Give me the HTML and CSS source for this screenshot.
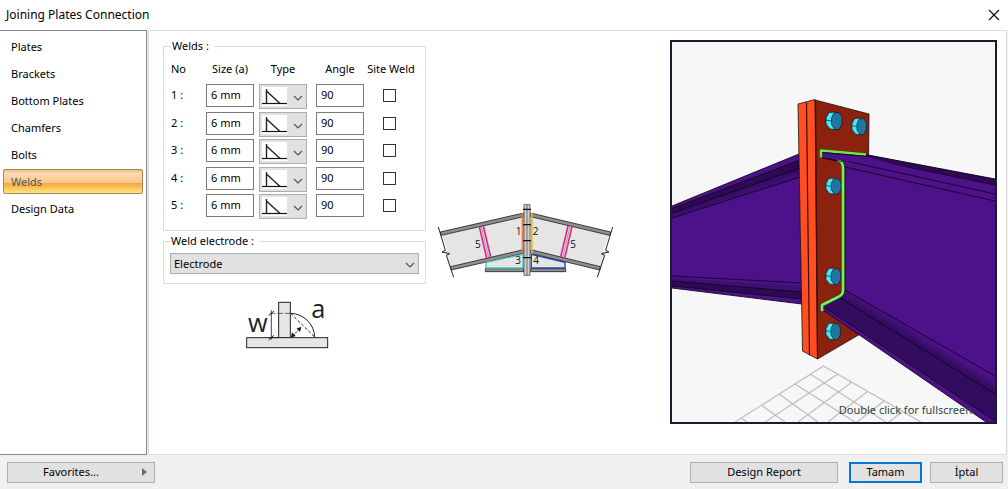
FILE: index.html
```html
<!DOCTYPE html>
<html lang="en">
<head>
<meta charset="utf-8">
<title>Joining Plates Connection</title>
<link rel="stylesheet" href="styles.css">
</head>
<body>
<header class="titlebar">
  <h1 class="title">Joining Plates Connection</h1>
  <button class="close" type="button" aria-label="Close">
    <svg width="12" height="12" viewBox="0 0 12 12"><path d="M1 1L11 11M11 1L1 11" stroke="#111" stroke-width="1.2"/></svg>
  </button>
</header>

<main class="main">
  <nav class="pages" aria-label="Pages">
    <button class="page" type="button">Plates</button>
    <button class="page" type="button">Brackets</button>
    <button class="page" type="button">Bottom Plates</button>
    <button class="page" type="button">Chamfers</button>
    <button class="page" type="button">Bolts</button>
    <button class="page selected" type="button" aria-current="page">Welds</button>
    <button class="page" type="button">Design Data</button>
  </nav>

  <section class="panel">
    <svg class="defs" width="0" height="0" aria-hidden="true">
      <symbol id="fillet" viewBox="0 0 25 19">
        <rect width="25" height="19" fill="#fff"/>
        <path d="M4.500 2V16.500M4.500 4L18 16.500" fill="none" stroke="#222" stroke-width="1.400"/>
        <path d="M0 16.500H25" stroke="#111" stroke-width="1.200"/>
      </symbol>
      <symbol id="chevron" viewBox="0 0 10 6">
        <path d="M1 1L5 5L9 1" fill="none" stroke="#555" stroke-width="1.200"/>
      </symbol>
    </svg>

    <div class="settings">
      <fieldset class="group">
        <legend>Welds :</legend>
        <table class="welds">
          <thead>
            <tr><th class="no">No</th><th class="size">Size (a)</th><th class="type">Type</th><th class="angle">Angle</th><th class="site">Site Weld</th></tr>
          </thead>
          <tbody>
            <tr>
              <td>1 :</td>
              <td><input class="field" type="text" value="6 mm" aria-label="Size of weld 1"></td>
              <td><div class="combo small"><select aria-label="Type of weld 1"><option aria-label="Fillet"></option></select><svg class="pic"><use href="#fillet"/></svg><svg class="arrow"><use href="#chevron"/></svg></div></td>
              <td><input class="field" type="text" value="90" aria-label="Angle of weld 1"></td>
              <td class="tick"><input type="checkbox" aria-label="Site weld 1"></td>
            </tr>
            <tr>
              <td>2 :</td>
              <td><input class="field" type="text" value="6 mm" aria-label="Size of weld 2"></td>
              <td><div class="combo small"><select aria-label="Type of weld 2"><option aria-label="Fillet"></option></select><svg class="pic"><use href="#fillet"/></svg><svg class="arrow"><use href="#chevron"/></svg></div></td>
              <td><input class="field" type="text" value="90" aria-label="Angle of weld 2"></td>
              <td class="tick"><input type="checkbox" aria-label="Site weld 2"></td>
            </tr>
            <tr>
              <td>3 :</td>
              <td><input class="field" type="text" value="6 mm" aria-label="Size of weld 3"></td>
              <td><div class="combo small"><select aria-label="Type of weld 3"><option aria-label="Fillet"></option></select><svg class="pic"><use href="#fillet"/></svg><svg class="arrow"><use href="#chevron"/></svg></div></td>
              <td><input class="field" type="text" value="90" aria-label="Angle of weld 3"></td>
              <td class="tick"><input type="checkbox" aria-label="Site weld 3"></td>
            </tr>
            <tr>
              <td>4 :</td>
              <td><input class="field" type="text" value="6 mm" aria-label="Size of weld 4"></td>
              <td><div class="combo small"><select aria-label="Type of weld 4"><option aria-label="Fillet"></option></select><svg class="pic"><use href="#fillet"/></svg><svg class="arrow"><use href="#chevron"/></svg></div></td>
              <td><input class="field" type="text" value="90" aria-label="Angle of weld 4"></td>
              <td class="tick"><input type="checkbox" aria-label="Site weld 4"></td>
            </tr>
            <tr>
              <td>5 :</td>
              <td><input class="field" type="text" value="6 mm" aria-label="Size of weld 5"></td>
              <td><div class="combo small"><select aria-label="Type of weld 5"><option aria-label="Fillet"></option></select><svg class="pic"><use href="#fillet"/></svg><svg class="arrow"><use href="#chevron"/></svg></div></td>
              <td><input class="field" type="text" value="90" aria-label="Angle of weld 5"></td>
              <td class="tick"><input type="checkbox" aria-label="Site weld 5"></td>
            </tr>
          </tbody>
        </table>
      </fieldset>

      <fieldset class="group electrode">
        <legend><label for="electrode">Weld electrode :</label></legend>
        <div class="combo"><select id="electrode"><option>Electrode</option></select><svg class="arrow"><use href="#chevron"/></svg></div>
      </fieldset>

      <svg class="sketch" width="97" height="61" viewBox="32 -9 291 183" role="img" aria-label="Weld throat dimensions">
        <g fill="#e6e6e6" stroke="#222" stroke-width="3">
          <rect x="130" y="34" width="35" height="106"/>
          <rect x="34" y="140" width="243" height="30"/>
        </g>
        <g fill="none" stroke="#222">
          <path d="M166 67C205 68 238 100 238 139" stroke-width="3"/>
          <path d="M166 67L238 138" stroke-width="3" stroke-dasharray="9 6"/>
          <path d="M103 67H166" stroke-width="2" stroke-dasharray="18 5"/>
          <path d="M108 58V146M98 140H130" stroke-width="2.500"/>
          <path d="M100 74L116 60M100 147L116 133" stroke-width="3"/>
          <path d="M171 136L194 112" stroke-width="3" stroke-dasharray="8 4"/>
        </g>
        <path d="M167 140L170 124L181 135ZM198 108L184 112L194 123Z" fill="#111"/>
        <text class="dim" x="38" y="123">w</text>
        <text class="dim" x="228" y="81">a</text>
      </svg>
    </div>

    <div class="overview">
      <svg width="175" height="75" viewBox="24 24 525 225" role="img" aria-label="Weld numbering">
        <g fill="#e5e5e4">
          <path d="M31 112L281 56V175L61 223L48 176L39 170L54 168Z"/>
          <path d="M542 112L302 56V175L512 223L525 176L534 170L519 168Z"/>
          <path d="M166 203L281 178V220H166ZM407 203L302 178V220H407Z"/>
        </g>
        <g fill="#8f8f8f" stroke="#222" stroke-width="2.500">
          <path d="M31 111L281 54V65L34 121Z"/>
          <path d="M542 111L302 54V65L539 121Z"/>
          <path d="M62 215L281 164V175L64 225Z"/>
          <path d="M511 215L302 164V175L509 225Z"/>
          <path d="M166 221H281V230H166ZM302 221H407V230H302Z"/>
        </g>
        <path d="M279 178L168 202V219H279Z" fill="none" stroke="#47c2c4" stroke-width="4"/>
        <path d="M304 178L405 202V219H304Z" fill="none" stroke="#2345a5" stroke-width="4"/>
        <g stroke="#e3268b" stroke-width="5">
          <path d="M148 95L170 190M160 93L182 186M426 95L404 190M414 93L392 186"/>
        </g>
        <path d="M154 94L176 188M420 94L398 188" stroke="#555" stroke-width="1.500"/>
        <path d="M278 54V176" stroke="#e77b49" stroke-width="6"/>
        <path d="M305 54V176" stroke="#e8b72e" stroke-width="6"/>
        <path d="M282 29H300V241H282Z" fill="#cfcfcf" stroke="#333" stroke-width="2"/>
        <path d="M291 29V241" stroke="#444" stroke-width="2"/>
        <path d="M279 43H303M279 89H303M279 137H303M279 188H303" stroke="#111" stroke-width="4"/>
        <path d="M25 96L46 166L36 171L59 176L49 181L71 247M548 96L527 166L537 171L514 176L524 181L502 247" fill="none" stroke="#222" stroke-width="3"/>
        <g class="num">
          <text x="257" y="119">1</text><text x="308" y="119">2</text>
          <text x="256" y="206">3</text><text x="310" y="206">4</text>
          <text x="135" y="159">5</text><text x="421" y="159">5</text>
        </g>
      </svg>
    </div>

    <div class="viewer">
      <svg class="scene" viewBox="672 42 323 380" preserveAspectRatio="xMidYMid slice" role="img" aria-label="3D model of the connection">
        <defs>
          <linearGradient id="lfade" gradientUnits="userSpaceOnUse" x1="736" y1="189" x2="740" y2="201"><stop offset="0" stop-color="#2e0a5c"/><stop offset="1" stop-color="#4d1289"/></linearGradient>
          <linearGradient id="rfade" gradientUnits="userSpaceOnUse" x1="922" y1="347" x2="930" y2="334"><stop offset="0" stop-color="#320c5e"/><stop offset=".7" stop-color="#4d1289"/></linearGradient>
          <g id="bolt" stroke="#06181f" stroke-width=".7" stroke-linejoin="round">
            <path d="M3 .500L10 0L6 9L9 17.500L4 17L0 12V6Z" fill="#45eaff"/>
            <path d="M0 8L5 9" />
            <path d="M8 1L13 .500L16 5V12L13 17.500H9L5.500 12.500V6Z" fill="#22759f"/>
          </g>
        </defs>
        <rect x="600" y="0" width="500" height="500" fill="#f7f7f7"/>
        <g fill="none" stroke="#bdbdb9" stroke-width="1.200">
          <path d="M735 422L823.500 366L921 422"/>
          <path d="M810 374L886 422M795 384L855 422M779 394L818 422M761 405L785 422M741 418L747 422"/>
          <path d="M838 374L765 422M852 382L798 422M867 392L828 422M884 401L857 422M902 412L889 422"/>
        </g>

        <path d="M672 206L799 154L802 304L672 288Z" fill="#4d1289"/>
        <path d="M672 213L800 168V177L672 218Z" fill="url(#lfade)"/>
        <path d="M672 208.500L800 160V168L672 213Z" fill="#2e0a55"/>
        <path d="M672 281L802 292V299L672 286Z" fill="#2e0a55"/>
        <path d="M672 278L802 286V292L672 281Z" fill="#3f0f75"/>
        <path d="M672 206L799 154M672 208.500L800 160M672 213L800 168M672 218L800 177M672 276L802 283M672 281L802 292M672 286L802 299M672 288L802 304" fill="none" stroke="#12041f" stroke-width=".9"/>

        <path d="M815 100L869 114L867 330L817.500 359Z" fill="#8a220d" stroke="#111" stroke-width=".8"/>
        <path d="M798 104L815 99.500L817.500 359L802.500 351Z" fill="#ff4f20" stroke="#111" stroke-width=".8"/>
        <path d="M815.500 100L817.500 359M806.500 102.500L809.500 355" stroke="#3a0d05" stroke-width="1.200"/>

        <use href="#bolt" x="826" y="112"/>
        <use href="#bolt" transform="translate(852 118) scale(.9 .95)"/>
        <use href="#bolt" transform="translate(826 178) scale(.94 .92)"/>
        <use href="#bolt" transform="translate(826 268) scale(.92 .95)"/>
        <use href="#bolt" transform="translate(826 323) scale(.9 .95)"/>

        <path d="M822 151L840 152L868 155L995 179V422H986L823 310V306L840 297L844.500 290V168L841 162L822 158Z" fill="#4d1289"/>
        <path d="M840 152L868 155L995 179V185Z" fill="#2e0a55"/>
        <path d="M846 290L995 376V394L840 299Z" fill="url(#rfade)"/>
        <path d="M840 298L995 394V421L824 307Z" fill="#320c5e"/>
        <path d="M822 152L868 155L995 179M840 153L995 185M842 160L995 194M845 167L995 201M845 290L995 376M840 298L995 394M824 307L995 421M823 310L986 422" fill="none" stroke="#12041f" stroke-width=".9"/>
        <path d="M822 158L841 162L845 168V290" fill="none" stroke="#111" stroke-width=".8"/>
        <g fill="none" stroke-linejoin="round">
          <path d="M821 158V151L866 155" stroke="#173d12" stroke-width="4"/>
          <path d="M821 157.500V150.500L866 154.500" stroke="#72e452" stroke-width="2.600"/>
          <path d="M837 160Q843 161 843 168V290Q843 295 838 297L822 305V311" stroke="#173d12" stroke-width="4"/>
          <path d="M837 160Q843 161 843 168V290Q843 295 838 297L822 305V311" stroke="#80ed62" stroke-width="2.600"/>
        </g>
        <path d="M822.500 152.500L868 157L900 166L842 160.500L822.500 157.500Z" fill="#4d1289"/>
        <path d="M822.500 152.500L868 156.500M822.500 157.500L842 161.500" stroke="#12041f" stroke-width=".9"/>
      </svg>
      <p class="hint">Double click for fullscreen.</p>
    </div>
  </section>
</main>

<footer class="footer">
  <button class="btn wide favorites" type="button"><span>Favorites...</span>
    <svg width="5" height="8" viewBox="0 0 5 8"><path d="M0 0L5 4L0 8Z" fill="#6d6d6d"/></svg>
  </button>
  <button class="btn wide report" type="button">Design Report</button>
  <div class="confirm">
    <button class="btn primary" type="button">Tamam</button>
    <button class="btn" type="button">İptal</button>
  </div>
</footer>
</body>
</html>
```
FILE: styles.css
```css
* { box-sizing: border-box; }

body {
  margin: 0;
  min-height: 100vh;
  display: flex;
  flex-direction: column;
  background: #f0f0f0;
  color: #000;
  font: 11px/14px "Noto Sans", "Open Sans", sans-serif;
}

button, input, select { font: inherit; color: inherit; border-radius: 0; margin: 0; }

.titlebar {
  height: 30px;
  padding: 0 8px 0 6px;
  display: flex;
  align-items: center;
  justify-content: space-between;
  background: #fff;
}
.title { margin: 0; font-size: 12px; font-weight: normal; }
.close { display: flex; padding: 0; border: 0; background: none; }

.main { flex: 1; display: flex; gap: 1px; padding-right: 1px; }

.pages {
  width: 147px;
  padding: 3px;
  display: flex;
  flex-direction: column;
  gap: 2px;
  background: #fff;
  border: 1px solid #828790;
  border-left: 0;
}
.page {
  height: 25px;
  padding: 0 7px;
  text-align: left;
  background: none;
  border: 1px solid transparent;
}
.page.selected {
  color: #555;
  border-color: #a58a58;
  border-radius: 2px;
  background: linear-gradient(#e9c08f 0, #fbd9b0 15%, #f8c88e 55%, #f4a840 58%, #fbcf65 85%, #fde28c 100%);
}

.panel {
  flex: 1;
  display: flex;
  padding: 9px 9px 30px 14px;
  background: #fff;
  border: 1px solid #dcdcdc;
}
.defs { position: absolute; }

.settings { width: 263px; display: flex; flex-direction: column; }

.group { min-width: 0; margin: 0; padding: 10px 7px 8px; border: 1px solid #dcdcdc; }
.group legend { padding: 0 5px 0 1px; line-height: 12px; }
.electrode { margin-top: 4px; padding: 6px 6px 9px; }

.welds { width: 100%; table-layout: fixed; border-collapse: collapse; }
.welds th, .welds td { padding: 0; vertical-align: top; }
.welds th { height: 22px; font-weight: normal; }
.welds .no { width: 35px; text-align: left; }
.welds .size { width: 53px; padding-right: 5px; }
.welds .type { width: 57px; padding-right: 9px; }
.welds .angle { width: 48px; }
.welds tbody tr { height: 27px; }
.welds tbody tr:nth-child(odd) { height: 28px; }
.welds td:first-child { padding-top: 4px; }
.welds .tick { padding: 5px 4px 0 0; }

.field {
  display: block;
  width: 48px;
  height: 23px;
  padding: 0 4px 2px;
  border: 1px solid #7a7a7a;
  background: #fff;
}
.tick input {
  appearance: none;
  display: block;
  width: 13px;
  height: 13px;
  margin: 0 auto;
  border: 1px solid #333;
  background: #fff;
}

.combo { position: relative; }
.combo select {
  appearance: none;
  display: block;
  width: 100%;
  height: 21px;
  padding: 0 20px 0 3px;
  border: 1px solid #adadad;
  background: #e1e1e1;
}
.combo.small { width: 48px; }
.combo.small select { height: 25px; }
.arrow, .pic { position: absolute; pointer-events: none; }
.arrow { width: 10px; height: 6px; right: 4px; top: 50%; margin-top: -2px; }
.pic { width: 25px; height: 19px; left: 3px; top: 3px; }

.sketch { margin-top: 4px; align-self: center; }
.dim { font: 76px "Open Sans", sans-serif; fill: #222; }

.overview { flex: 1; padding: 163px 0 0 12px; }
.num { font: 30px "Open Sans", sans-serif; fill: #111; }

.viewer {
  position: relative;
  width: 327px;
  border: 2px solid #1a1a30;
  background: #f7f7f7;
  overflow: hidden;
}
.scene { position: absolute; inset: 0; width: 100%; height: 100%; }
.hint {
  position: absolute;
  right: 20px;
  bottom: 4px;
  margin: 0;
  color: #2c4545;
  line-height: 16px;
  white-space: nowrap;
}

.footer { display: flex; align-items: center; gap: 11px; height: 34px; padding: 0 5px 0 7px; }
.confirm { display: flex; gap: 8px; }
.btn {
  width: 73px;
  height: 21px;
  padding: 0;
  border: 1px solid #adadad;
  background: #e1e1e1;
}
.btn.wide { width: 148px; }
.btn.primary { border: 2px solid #0078d7; }
.report { margin-left: auto; }
.favorites { display: flex; align-items: center; }
.favorites span { flex: 1; padding-right: 8px; }
.favorites svg { margin-right: 7px; }
```
